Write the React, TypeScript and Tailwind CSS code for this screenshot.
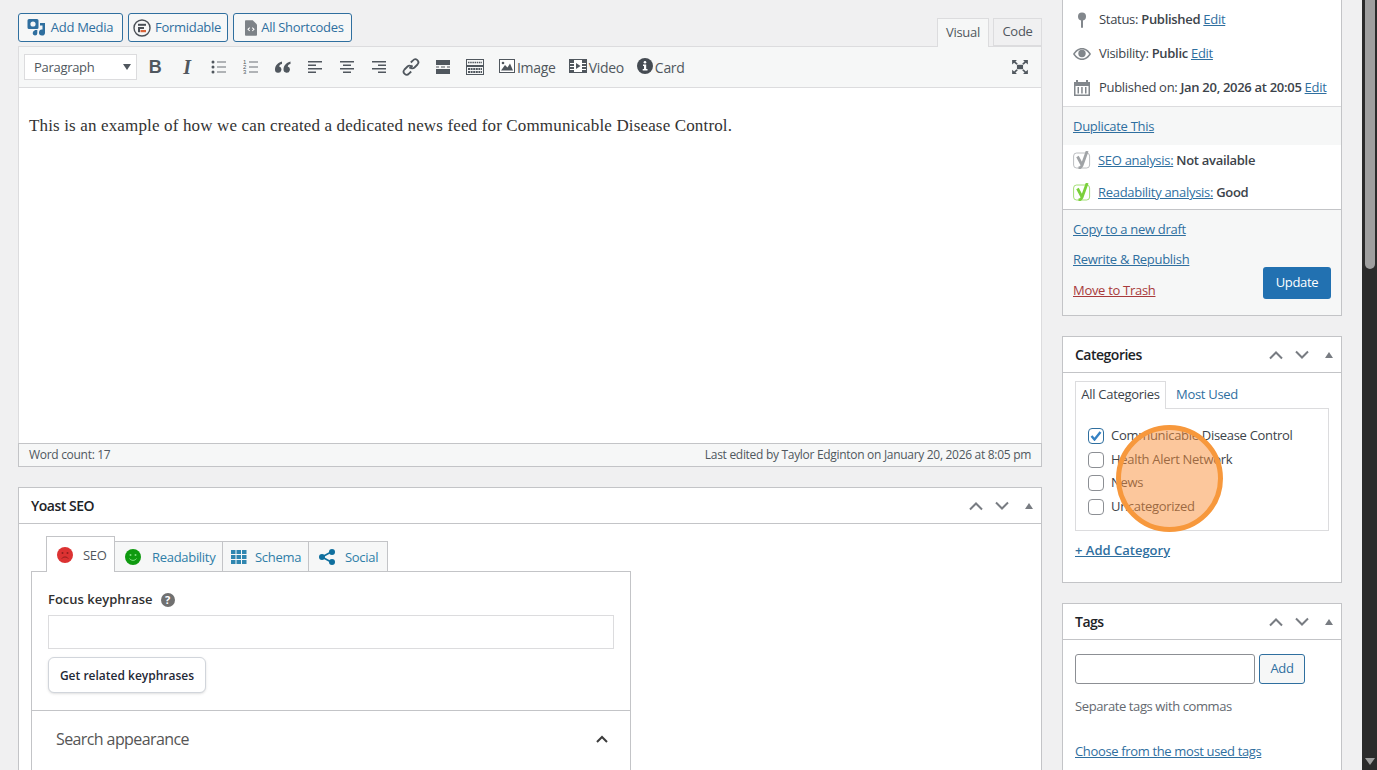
import type { ReactNode } from 'react';

const ui = { fontFamily: '"Open Sans", "Noto Sans", sans-serif' };

function MediaIcon() {
  return (
    <svg width="18" height="17" viewBox="0 0 18 17" className="shrink-0 ml-[1px]">
      <path fill="#2f6f9f" d="M2 0h8a1.500 1.500 0 0 1 1.500 1.500v7A1.500 1.500 0 0 1 10 10H2A1.500 1.500 0 0 1 .5 8.500v-7A1.500 1.500 0 0 1 2 0zm4 2.400a2.600 2.600 0 1 0 0 5.200 2.600 2.600 0 0 0 0-5.200z" />
      <path fill="#2f6f9f" d="M13 4h5v9.500a3 3 0 1 1-2.500-2.900V6.500H13zM7.500 11h2.800v3.200a2.300 2.300 0 1 1-2-2.300V13h-.8z" />
    </svg>
  );
}

function FormidableIcon() {
  return (
    <svg width="18" height="18" viewBox="0 0 18 18" className="shrink-0">
      <circle cx="9" cy="9" r="8" fill="none" stroke="#4a4f55" strokeWidth="1.400" />
      <rect x="5" y="4.800" width="8" height="2" fill="#4a4f55" />
      <rect x="5" y="8" width="6" height="2" fill="#4a4f55" />
      <rect x="7.500" y="11" width="5.500" height="2.200" fill="#d9643a" />
      <rect x="5" y="10" width="2" height="3.200" fill="#4a4f55" />
    </svg>
  );
}

function ShortcodeIcon() {
  return (
    <svg width="12" height="16" viewBox="0 0 14 18" className="shrink-0">
      <path fill="#7d8287" d="M1 0h8l5 5v12a1 1 0 0 1-1 1H1a1 1 0 0 1-1-1V1a1 1 0 0 1 1-1z" />
      <path fill="none" stroke="#fff" strokeWidth="1.200" d="M5.500 8.500 3.500 10.500l2 2M8.500 8.500l2 2-2 2" />
    </svg>
  );
}

function Lines({ rows }: { rows: number[][] }) {
  return (
    <svg width="16" height="14" viewBox="0 0 16 14">
      {rows.map((r, i) => (
        <rect key={i} x={r[0]} y={r[1]} width={r[2]} height={r[3] ?? 1.500} fill="#50575e" />
      ))}
    </svg>
  );
}

function BulletIcon() {
  return (
    <svg width="16" height="14" viewBox="0 0 16 14">
      {[2, 7, 12].map((y) => (
        <g key={y}>
          <circle cx="2" cy={y} r="1.500" fill="#50575e" />
          <rect x="6" y={y - 0.500} width="9" height="1" fill="#6b7177" />
        </g>
      ))}
    </svg>
  );
}

function NumberIcon() {
  return (
    <svg width="16" height="14" viewBox="0 0 16 14">
      {[2, 7, 12].map((y, i) => (
        <g key={y}>
          <text x="0" y={y + 2} fontSize="6" fill="#50575e" fontFamily="Liberation Sans">{i + 1}</text>
          <rect x="6" y={y - 0.500} width="9" height="1" fill="#6b7177" />
        </g>
      ))}
    </svg>
  );
}

function QuoteIcon() {
  return (
    <svg width="16" height="13" viewBox="0 0 16 13">
      <path fill="#50575e" d="M7 .5C3.500 1.500 0 4 0 8.500a3.200 3.200 0 1 0 4.200-3C4.500 4.200 5.500 3.300 7 3zM15.500 .5C12 1.500 8.500 4 8.500 8.500a3.200 3.200 0 1 0 4.200-3c.3-1.300 1.300-2.200 2.800-2.500z" />
    </svg>
  );
}

function LinkIcon() {
  return (
    <svg width="18" height="18" viewBox="0 0 18 18" fill="none" stroke="#50575e" strokeWidth="1.800">
      <path d="M7.500 10.500 10.500 7.500" />
      <path d="M8.800 4.500 11 2.300a3 3 0 0 1 4.500 4.200l-3 3a3 3 0 0 1-3.500.4" />
      <path d="M9.200 13.500 7 15.700a3 3 0 0 1-4.500-4.200l3-3a3 3 0 0 1 3.500-.4" />
    </svg>
  );
}

function HrIcon() {
  return (
    <svg width="16" height="14" viewBox="0 0 16 14">
      <rect x="1" y="0" width="14" height="5" fill="#50575e" />
      <rect x="1" y="6.500" width="3" height="1" fill="#50575e" />
      <rect x="6" y="6.500" width="4" height="1" fill="#50575e" />
      <rect x="12" y="6.500" width="3" height="1" fill="#50575e" />
      <rect x="1" y="9" width="14" height="5" fill="#50575e" />
    </svg>
  );
}

function KitchenIcon() {
  return (
    <svg width="18" height="16" viewBox="0 0 18 16">
      <rect x="0.500" y="0.500" width="17" height="6" fill="none" stroke="#50575e" />
      <path stroke="#50575e" strokeWidth="1.500" strokeDasharray="1.500 .7" d="M2 3.500h14" />
      <rect x="0.500" y="7.500" width="17" height="8" fill="none" stroke="#50575e" />
      <path stroke="#50575e" strokeWidth="2" strokeDasharray="2 .6" d="M2 10h14M2 13h14" />
    </svg>
  );
}

function ImageIcon() {
  return (
    <svg width="16" height="14" viewBox="0 0 16 14" className="shrink-0 -mt-[2px]">
      <rect x="0.500" y="0.500" width="15" height="13" fill="#fff" stroke="#50575e" />
      <path fill="#50575e" d="M2 11.500 6 6l2.500 2.500L11 4.500l3 7z" />
      <circle cx="4" cy="4" r="1.300" fill="#50575e" />
    </svg>
  );
}

function VideoIcon() {
  return (
    <svg width="18" height="14" viewBox="0 0 18 14" className="shrink-0 -mt-[2px]">
      <rect x="0.500" y="0.500" width="17" height="13" fill="#fff" stroke="#50575e" />
      <rect x="1" y="1" width="4" height="12" fill="#50575e" />
      <rect x="13" y="1" width="4" height="12" fill="#50575e" />
      <path fill="#50575e" d="M7 4l4.500 3L7 10z" />
      <path stroke="#fff" d="M1 4.500h4M1 7.500h4M1 10.500h4M13 4.500h4M13 7.500h4M13 10.500h4" />
    </svg>
  );
}

function InfoIcon() {
  return (
    <svg width="16" height="16" viewBox="0 0 16 16" className="shrink-0 -mt-[3px]">
      <circle cx="8" cy="8" r="8" fill="#454b52" />
      <circle cx="8" cy="4.300" r="1.300" fill="#fff" />
      <path fill="#fff" d="M6 6.500h3.200V11H10.500v1.500h-4.800V11H7V8H6z" />
    </svg>
  );
}

function FullscreenIcon() {
  return (
    <svg width="16" height="14" viewBox="0 0 18 16">
      <path fill="#50575e" d="M0 0h5.500L3.800 1.700 6.500 4.300 5 5.500 2.300 3 0 5zM18 0h-5.500l1.700 1.700-2.700 2.600L13 5.500 15.700 3 18 5zM0 16h5.500l-1.700-1.700 2.700-2.600L5 10.500 2.300 13 0 11zM18 16h-5.500l1.700-1.700-2.700-2.600 1.500-1.200 2.700 2.500L18 11z" />
      <rect x="5.500" y="5.500" width="7" height="5" fill="#50575e" />
    </svg>
  );
}

function PinIcon() {
  return (
    <svg width="10" height="16" viewBox="0 0 10 16">
      <circle cx="5" cy="4.500" r="4" fill="#82878c" />
      <rect x="4" y="7" width="2" height="9" rx="1" fill="#82878c" />
    </svg>
  );
}

function EyeIcon() {
  return (
    <svg width="18" height="12" viewBox="0 0 18 12">
      <path fill="#82878c" d="M9 0c4 0 7 2.600 9 6-2 3.400-5 6-9 6S2 9.400 0 6c2-3.400 5-6 9-6zm0 1.500C6 1.500 3.600 3.300 1.800 6 3.600 8.700 6 10.500 9 10.500S14.400 8.700 16.200 6C14.400 3.300 12 1.500 9 1.500z" />
      <circle cx="9" cy="5.500" r="3.700" fill="#82878c" />
    </svg>
  );
}

function CalendarIcon() {
  return (
    <svg width="16" height="16" viewBox="0 0 16 16">
      <path fill="#82878c" d="M0 2h2V0h2v2h8V0h2v2h2v14H0zm1.500 4v8.500h13V6z" />
      <path fill="#82878c" d="M3.500 7h1.500v6.500H3.500zM7.200 7h1.500v6.500H7.200zM11 7h1.500v6.500H11z" />
    </svg>
  );
}

function YoastIcon({ color }: { color: string }) {
  return (
    <svg width="18" height="18" viewBox="0 0 18 18" className="shrink-0 mb-[2px]">
      <rect x="0.600" y="2" width="16" height="15" rx="3" fill="none" stroke={color} strokeWidth="1" opacity="0.700" />
      <path fill="none" stroke={color} strokeWidth="2.800" d="M4.500 5.500 9 14M14.200 0 9 14.500c-.7 1.700-2 2.500-3.500 2.500" />
    </svg>
  );
}

function Chevrons() {
  return (
    <div className="flex items-center">
      <svg width="14" height="10" viewBox="0 0 14 10" fill="none" stroke="#787c82" strokeWidth="2">
        <path d="M1 8.500 7 2.500l6 6" />
      </svg>
      <svg width="14" height="10" viewBox="0 0 14 10" fill="none" stroke="#787c82" strokeWidth="2" className="ml-[12px]">
        <path d="M1 1.500 7 7.500l6-6" />
      </svg>
      <svg width="8" height="6" viewBox="0 0 8 6" className="ml-[16px] mr-[8px]">
        <path fill="#787c82" d="M4 0l4 6H0z" />
      </svg>
    </div>
  );
}

function Face({ fill, feature, sad }: { fill: string; feature: string; sad?: boolean }) {
  return (
    <svg width="16" height="16" viewBox="0 0 16 16" className="shrink-0">
      <circle cx="8" cy="8" r="8" fill={fill} />
      <circle cx="5.500" cy="6" r="1" fill={feature} />
      <circle cx="10.500" cy="6" r="1" fill={feature} />
      <path fill="none" stroke={feature} strokeWidth="1" d={sad ? 'M4.800 11.500c1.500-2 4.900-2 6.400 0' : 'M4.500 9.500c1.500 2.500 5.500 2.500 7 0'} />
    </svg>
  );
}

function A({ children, className = 'text-[#2f6f9f]' }: { children: ReactNode; className?: string }) {
  return <a className={`underline ${className}`}>{children}</a>;
}

function MediaButton({ children, className }: { children: ReactNode; className: string }) {
  return (
    <button className={`h-[29px] flex items-center justify-center gap-[4px] rounded-[3px] border border-[#2f6f9f] bg-[#f6f7f7] text-[13px] text-[#2f6f9f] ${className}`}>
      {children}
    </button>
  );
}

function ToolSlot({ children }: { children: ReactNode }) {
  return <span className="w-8 h-7 flex items-center justify-center">{children}</span>;
}

function BoxHeader({ title }: { title: string }) {
  return (
    <div className="h-[36px] flex items-center justify-between border-b border-[#c3c4c7] pl-[12px]">
      <h2 className="text-[14px] font-semibold tracking-[-0.5px] text-[#1d2327]">{title}</h2>
      <Chevrons />
    </div>
  );
}

function Editor() {
  return (
    <>
      <div className="h-[34px] -mb-px flex justify-between relative">
        <div className="flex gap-[5px]">
          <MediaButton className="w-[105px] pr-[2px]">
            <MediaIcon />
            <span className="ml-[2px]">Add Media</span>
          </MediaButton>
          <MediaButton className="w-[100px] pr-[2px]">
            <FormidableIcon />
            <span>Formidable</span>
          </MediaButton>
          <MediaButton className="w-[119px] pl-[4px]">
            <ShortcodeIcon />
            <span>All Shortcodes</span>
          </MediaButton>
        </div>
        <div className="flex items-end gap-[4px] text-[13px] text-[#50575e]">
          <span className="w-[52px] h-[29px] flex items-center justify-center border border-[#dcdcde] border-b-0 bg-[#f6f7f7]">Visual</span>
          <span className="w-[49px] h-[28px] mb-px flex items-center justify-center border border-[#dcdcde] bg-[#f0f0f1]">Code</span>
        </div>
      </div>
      <div className="h-[42px] flex items-center pl-[5px] pr-[13px] border border-[#dcdcde] bg-[#f6f7f7] text-[14px] text-[#50575e]">
        <div className="w-[113px] h-[26px] flex items-center justify-between pl-[9px] pr-[5px] border border-[#dcdcde] bg-white text-[13px] mr-[2px]">
          <span className="pt-[1px]">Paragraph</span>
          <svg width="8" height="6" viewBox="0 0 8 6"><path fill="#50575e" d="M0 0h8L4 6z" /></svg>
        </div>
        <ToolSlot><b className="text-[18px] leading-none text-[#50575e]" style={{ fontFamily: '"Liberation Sans", sans-serif' }}>B</b></ToolSlot>
        <ToolSlot><b className="text-[20px] leading-none italic text-[#50575e]" style={{ fontFamily: '"Liberation Serif", serif' }}>I</b></ToolSlot>
        <ToolSlot><BulletIcon /></ToolSlot>
        <ToolSlot><NumberIcon /></ToolSlot>
        <ToolSlot><QuoteIcon /></ToolSlot>
        <ToolSlot><Lines rows={[[1, 1, 14], [1, 4.500, 8], [1, 8, 14], [1, 11.500, 8]]} /></ToolSlot>
        <ToolSlot><Lines rows={[[1, 1, 14], [4, 4.500, 8], [1, 8, 14], [4, 11.500, 8]]} /></ToolSlot>
        <ToolSlot><Lines rows={[[1, 1, 14], [7, 4.500, 8], [1, 8, 14], [7, 11.500, 8]]} /></ToolSlot>
        <ToolSlot><LinkIcon /></ToolSlot>
        <ToolSlot><HrIcon /></ToolSlot>
        <ToolSlot><KitchenIcon /></ToolSlot>
        <span className="flex items-center gap-[2px] ml-[8px]"><ImageIcon />Image</span>
        <span className="flex items-center gap-[2px] ml-[13px]"><VideoIcon />Video</span>
        <span className="flex items-center gap-[2px] ml-[13px]"><InfoIcon />Card</span>
        <span className="ml-auto flex"><FullscreenIcon /></span>
      </div>
      <div className="h-[355px] border-x border-[#dcdcde] bg-white pl-[10px] pt-[27px]">
        <p className="text-[17px] tracking-[0.15px] leading-[22px] text-[#333]" style={{ fontFamily: '"Liberation Serif", serif' }}>
          This is an example of how we can created a dedicated news feed for Communicable Disease Control.
        </p>
      </div>
      <div className="h-[24px] flex items-center justify-between px-[10px] border border-[#c3c4c7] bg-[#f6f7f7] text-[12px] text-[#50575e]">
        <span>Word count: 17</span>
        <span>Last edited by Taylor Edginton on January 20, 2026 at 8:05 pm</span>
      </div>
    </>
  );
}

function YoastTab({ label, icon, className }: { label: string; icon: ReactNode; className: string }) {
  return (
    <div className={`h-[31px] flex items-center border border-l-0 border-[#c3c4c7] bg-[#f6f7f7] text-[13px] text-[#2f7ea8] ${className}`}>
      {icon}
      <span className="pt-[2px]">{label}</span>
    </div>
  );
}

function Yoast() {
  return (
    <section className="mt-[20px] border border-[#c3c4c7] bg-white">
      <BoxHeader title="Yoast SEO" />
      <div className="pl-[12px] pt-[12px]">
        <div className="ml-[15px] flex items-end -mb-px relative">
          <div className="w-[69px] h-[36px] flex items-center pl-[10px] gap-[10px] border border-b-0 border-[#c3c4c7] bg-white text-[13px] text-[#50575e]">
            <Face fill="#dc3232" feature="#8f1d1d" sad />
            <span className="pt-[2px]">SEO</span>
          </div>
          <YoastTab label="Readability" className="w-[108px] pl-[10px] gap-[11px]" icon={<Face fill="#0f9a10" feature="#7fe07f" />} />
          <YoastTab label="Schema" className="w-[86px] pl-[8px] gap-[8px]" icon={
            <svg width="16" height="14" viewBox="0 0 16 14">
              {[0, 5, 10].map((y) => [0, 5.500, 11].map((x) => (
                <rect key={`${x}-${y}`} x={x} y={y} width="4.500" height="4" fill="#2f86b0" />
              )))}
            </svg>
          } />
          <YoastTab label="Social" className="w-[79px] pl-[10px] gap-[10px]" icon={
            <svg width="16" height="16" viewBox="0 0 16 16">
              <path stroke="#0f6f9e" strokeWidth="1.600" d="M3 8 13 2.500M3 8l10 5.500" />
              <circle cx="3" cy="8" r="3" fill="#0f6f9e" />
              <circle cx="13" cy="3" r="3" fill="#0f6f9e" />
              <circle cx="13" cy="13" r="3" fill="#0f6f9e" />
            </svg>
          } />
        </div>
        <div className="w-[600px] border border-[#c3c4c7] h-[240px]">
          <div className="pl-[16px] pr-[16px] pt-[17px] pb-[17px] border-b border-[#c3c4c7]">
            <div className="flex items-center gap-[8px] h-[20px] pt-[2px] text-[13px] tracking-normal font-semibold text-[#303030]">
              Focus keyphrase
              <span className="w-[14px] h-[14px] rounded-full bg-[#707070] text-white text-[11px] font-bold flex items-center justify-center">?</span>
            </div>
            <div className="mt-[6px] w-[566px] h-[34px] border border-[#dcdcde] bg-white" />
            <button className="mt-[8px] w-[158px] h-[36px] pt-[2px] rounded-[6px] border border-[#d1d5db] bg-white text-[12px] tracking-normal font-semibold text-[#1f2937] shadow-sm">
              Get related keyphrases
            </button>
          </div>
          <div className="h-[58px] flex items-center justify-between pl-[24px] pr-[22px] pb-[2px] text-[16px] tracking-[-0.6px] text-[#555]">
            <span>Search appearance</span>
            <svg width="12" height="8" viewBox="0 0 12 8" fill="none" stroke="#3c3c3c" strokeWidth="2"><path d="M1 7l5-5 5 5" /></svg>
          </div>
        </div>
      </div>
    </section>
  );
}

function Publish() {
  return (
    <section className="border border-t-0 border-[#c3c4c7] bg-white text-[13px] text-[#3c434a]">
      <div className="pt-[3px] pb-[1px] border-b border-[#dcdcde]">
        <div className="h-[34px] flex items-center">
          <span className="w-[36px] flex justify-center pl-[2px]"><PinIcon /></span>
          <span>Status: <b className="font-semibold">Published</b> <A>Edit</A></span>
        </div>
        <div className="h-[34px] flex items-center">
          <span className="w-[36px] flex justify-center pl-[2px]"><EyeIcon /></span>
          <span>Visibility: <b className="font-semibold">Public</b> <A>Edit</A></span>
        </div>
        <div className="h-[34px] flex items-center">
          <span className="w-[36px] flex justify-center pl-[2px]"><CalendarIcon /></span>
          <span>Published on: <b className="font-semibold">Jan 20, 2026 at 20:05</b> <A>Edit</A></span>
        </div>
      </div>
      <div className="h-[38px] flex items-center pl-[10px] pt-[1px] bg-[#f6f7f7]">
        <A>Duplicate This</A>
      </div>
      <div className="border-b border-[#c3c4c7]">
        <div className="h-[32px] flex items-center pl-[10px] gap-[7px]">
          <YoastIcon color="#a0a3a6" />
          <span><A>SEO analysis:</A> <b className="font-semibold">Not available</b></span>
        </div>
        <div className="h-[32px] flex items-center pl-[10px] gap-[7px]">
          <YoastIcon color="#7ad03a" />
          <span><A>Readability analysis:</A> <b className="font-semibold">Good</b></span>
        </div>
      </div>
      <div className="h-[105px] flex justify-between items-end bg-[#f6f7f7] pl-[10px] pr-[10px] pb-[16px]">
        <div className="flex flex-col self-start pt-[9px] gap-[10px] leading-[20px]">
          <A>Copy to a new draft</A>
          <A>Rewrite &amp; Republish</A>
          <A className="text-[#a83a3c] mt-[1px]">Move to Trash</A>
        </div>
        <button className="w-[68px] h-[32px] rounded-[3px] bg-[#2271b1] text-white text-[13px]">Update</button>
      </div>
    </section>
  );
}

function Categories() {
  const cats = [
    { label: 'Communicable Disease Control', on: true, h: 'h-[24px]' },
    { label: 'Health Alert Network', on: false, h: 'h-[23px]' },
    { label: 'News', on: false, h: 'h-[24px]' },
    { label: 'Uncategorized', on: false, h: 'h-[24px]' },
  ];
  return (
    <section className="mt-[20px] border border-[#c3c4c7] bg-white h-[247px] text-[13px]">
      <BoxHeader title="Categories" />
      <div className="pl-[12px] pr-[12px] pt-[8px]">
        <div className="flex items-end -mb-px relative">
          <span className="w-[91px] h-[28px] pb-[2px] flex items-center justify-center border border-b-0 border-[#dcdcde] bg-white text-[#3c434a]">All Categories</span>
          <span className="ml-[10px] text-[#2f6f9f] pb-[5px]">Most Used</span>
        </div>
        <div className="h-[123px] border border-[#dcdcde] pl-[12px] pt-[15px]">
          {cats.map((c) => (
            <label key={c.label} className={`flex items-center gap-[7px] text-[#3c434a] ${c.h}`}>
              <span className={`w-[16px] h-[16px] rounded-[4px] border flex items-center justify-center bg-white ${c.on ? 'border-[#2f6f9f]' : 'border-[#8c8f94]'}`}>
                {c.on && (
                  <svg width="12" height="10" viewBox="0 0 12 10" fill="none" stroke="#3582c4" strokeWidth="2.400"><path d="M1.500 5l3 3.500L10.500 1" /></svg>
                )}
              </span>
              {c.label}
            </label>
          ))}
        </div>
        <div className="mt-[10px]"><A className="text-[13px] tracking-normal font-semibold text-[#2f6f9f]">+ Add Category</A></div>
      </div>
    </section>
  );
}

function Tags() {
  return (
    <section className="mt-[20px] border border-[#c3c4c7] bg-white h-[300px] text-[13px]">
      <BoxHeader title="Tags" />
      <div className="pl-[12px] pt-[14px]">
        <div className="flex gap-[4px]">
          <div className="w-[180px] h-[30px] rounded-[3px] border border-[#8c8f94] bg-white" />
          <button className="w-[46px] h-[30px] rounded-[3px] border border-[#2f6f9f] bg-[#f6f7f7] text-[#2f6f9f]">Add</button>
        </div>
        <p className="mt-[12px] h-[20px] leading-[20px] tracking-[-0.4px] text-[#646970]">Separate tags with commas</p>
        <div className="mt-[26px]"><A className="tracking-[-0.35px] text-[#2f6f9f]">Choose from the most used tags</A></div>
      </div>
    </section>
  );
}

function Scrollbar() {
  return (
    <div className="w-[15px] shrink-0 bg-[#2b2b2b] relative">
      <div className="ml-[3px] w-[10px] h-[269px] rounded-b-full bg-[#9f9f9f]" />
      <svg width="10" height="7" viewBox="0 0 10 7" className="absolute left-[3px] bottom-[5px]">
        <path fill="#9f9f9f" d="M0 0h10L5 7z" />
      </svg>
    </div>
  );
}

export default function App() {
  return (
    <div className="h-[770px] w-full overflow-hidden flex bg-[#f0f0f1] relative tracking-[-0.3px]" style={ui}>
      <div className="flex-1 flex pl-[18px] min-w-0">
        <main className="w-[1024px] pt-[13px] shrink-0">
          <Editor />
          <Yoast />
        </main>
        <aside className="w-[280px] ml-[20px] shrink-0">
          <Publish />
          <Categories />
          <Tags />
        </aside>
      </div>
      <Scrollbar />
      {/* click marker */}
      <div className="absolute left-[1116px] top-[425px] w-[107px] h-[107px] rounded-full border-[5px] border-[#f7983c] bg-[#f9903a]/50" />
    </div>
  );
}
